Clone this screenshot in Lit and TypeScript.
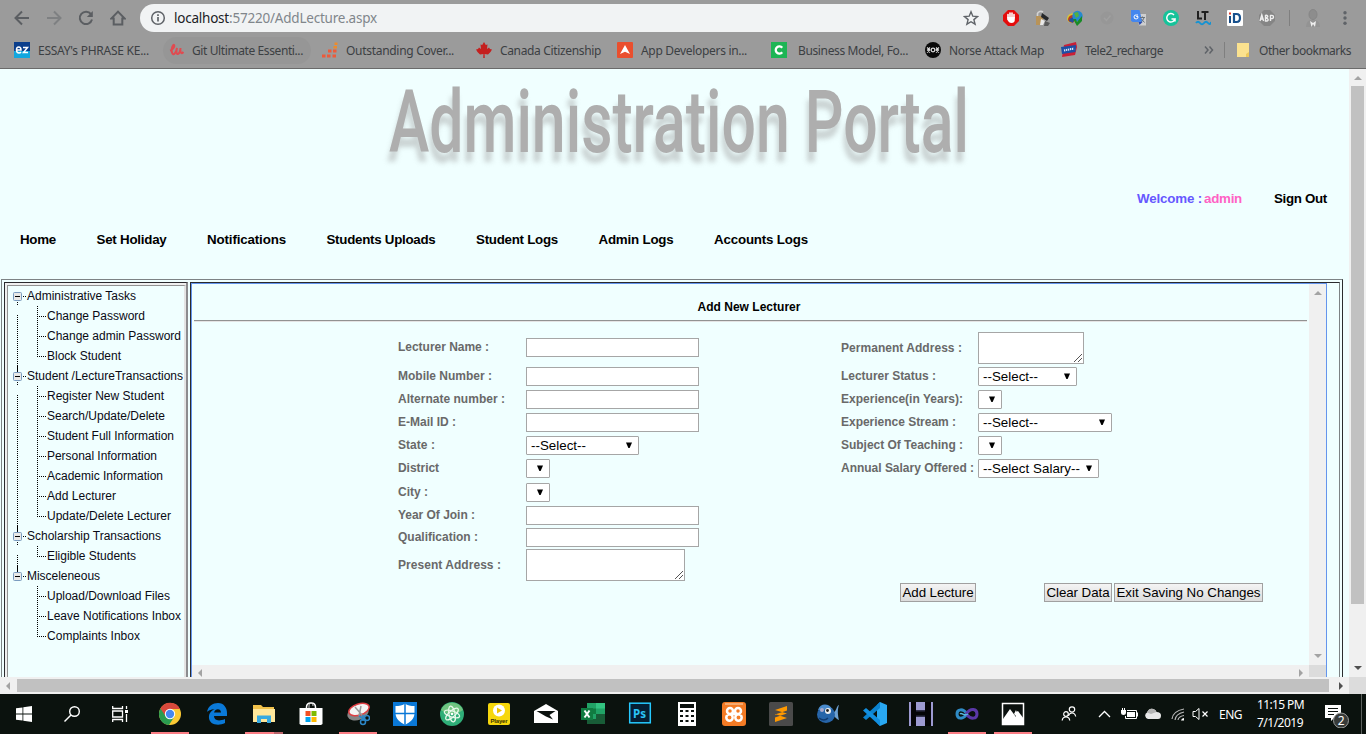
import { LitElement, html, css, svg } from "lit";
import { customElement, property } from "lit/decorators.js";

/* A single line of text whose tracking is adjusted to fill a given width. */
@customElement("fit-text")
class FitText extends LitElement {
  @property({ type: Number }) w = 0;
  @property() text = "";
  static styles = css`
    :host { display: inline-block; white-space: pre; flex: none; }
  `;
  render() {
    return html`<span>${this.text}</span>`;
  }
  updated() {
    const s = this.renderRoot.querySelector("span") as HTMLElement;
    s.style.letterSpacing = "0px";
    const natural = s.getBoundingClientRect().width;
    s.style.letterSpacing = (this.w - natural) / this.text.length + "px";
    this.style.width = this.w + "px";
  }
}

const t = (text: string, w: number) => html`<fit-text .text=${text} .w=${w}></fit-text>`;
const ico = (size: number, body: unknown, box = size) =>
  html`<svg width=${size} height=${size} viewBox="0 0 ${box} ${box}" fill="none">${body}</svg>`;

const nav = {
  back: svg`<path d="M15 8H2M8 1.5L1.5 8L8 14.5" stroke="#5b5e62" stroke-width="2"/>`,
  fwd: svg`<path d="M1 8H14M8 1.5L14.5 8L8 14.5" stroke="#7e8082" stroke-width="2"/>`,
  reload: svg`<path d="M13 4.2A6.2 6.2 0 1 0 14 9.5" stroke="#5b5e62" stroke-width="2"/><path d="M14.8 1V7H8.8Z" fill="#5b5e62"/>`,
  home: svg`<path d="M8 1.6L1.5 8.4H3.7V14.6H12.3V8.4H14.5Z" stroke="#5b5e62" stroke-width="2"/>`,
  info: svg`<circle cx="8" cy="8" r="6.3" stroke="#5f6368" stroke-width="1.5"/><path d="M8 7V11.5M8 4.2V5.9" stroke="#5f6368" stroke-width="1.7"/>`,
  star: svg`<path d="M8 1.8L9.8 6.2L14.5 6.5L10.9 9.6L12.1 14.2L8 11.7L3.9 14.2L5.1 9.6L1.5 6.5L6.2 6.2Z" stroke="#5f6368" stroke-width="1.4"/>`,
};

const extensions = [
  svg`<path d="M5 0H11L16 5V11L11 16H5L0 11V5Z" fill="#e40d0d"/><path d="M5 8V4.5M7 7.500V3M9 7.500V3M11 8V4.500" stroke="#fff" stroke-width="1.600" stroke-linecap="round"/><path d="M4.200 7H11.800V10C11.800 12 10.500 13 8.500 13C6.500 13 5.500 12 4.200 9.500Z" fill="#fff"/>`,
  svg`<path d="M2.500 6V3.500A3.500 3 0 0 1 8 2" stroke="#d4d4d4" stroke-width="1.600"/><path d="M1 6H8V15H1Z" fill="#b89358"/><path d="M7 3L14 8L12 11L6 7Z" fill="#26282b"/><path d="M6 9L10 11L8 15H5Z" fill="#e8e8e8"/><path d="M10 11L15 13L13 16H9Z" fill="#5a5a5a"/>`,
  svg`<path d="M0 9C0 4 6 2 8 4L9 11C5 14 1 13 0 9Z" fill="#d9c531"/><path d="M1 9C2 5 6 4 8 6L7 12C4 13 1 12 1 9Z" fill="#b73c23"/><path d="M2 11C3 7 6 7 8 8L6 13Z" fill="#264f9c"/><circle cx="10.500" cy="6" r="5.200" fill="#2589cf"/><path d="M7 3L11 2L12 6L9 8Z" fill="#52b043"/><path d="M6 9H9L10 12L15 6V11L10 16Z" fill="#188b26"/>`,
  svg`<circle cx="8" cy="8" r="6.500" fill="#979797"/><path d="M5 8L7.500 10.500L11.500 5.500" stroke="#a0a0a0" stroke-width="1.500"/>`,
  svg`<path d="M6 4H15V15.500H8Z" fill="#cfcfcf"/><path d="M0 0H8.500L11.500 12H1.500L0 10.500Z" fill="#4587ee"/><path d="M7 5H5.500A2 2 0 1 0 7 6.500H5.200" stroke="#fff" stroke-width="1"/><path d="M9 7.500H14M11.500 6.500V7.500M13 7.500C12.500 10 11 11 10 12M10.500 9L13.500 12.500" stroke="#68737e"/><path d="M7.500 12H11.500L8.500 15Z" fill="#2b4bb0"/>`,
  svg`<circle cx="8" cy="8" r="8" fill="#15c39a"/><path d="M11 4.900A4.200 4.200 0 1 0 12 9H8.500M12 9V11.500" stroke="#fff" stroke-width="1.500"/>`,
  svg`<path d="M3 1V8.500H7M6.500 2H13.500M10 2V10" stroke="#202020" stroke-width="2"/><path d="M1 13Q3 10.500 5 13T9 13T13 13T16 12" stroke="#1593d3" stroke-width="2"/>`,
  svg`<rect width="16" height="16" rx="1" fill="#fff"/><path d="M3 6V13" stroke="#184c85" stroke-width="2"/><path d="M3 2.500V4.500" stroke="#e53927" stroke-width="2"/><path d="M7 4H9.500Q13 4 13 8T9.500 12H7Z" stroke="#17508d" stroke-width="2.200"/>`,
  svg`<path d="M5 0H11L16 5V11L11 16H5L0 11V5Z" fill="#858585"/><path d="M1 11L2.800 5L4.600 11M1.600 9H4M6.500 5V11H8Q9.500 10.500 9 9.200T6.500 8Q9 7.500 8.700 6.200T6.500 5.300M11.500 11V5.500Q14.500 5 14.500 7T11.500 8.500" stroke="#eee" stroke-width="1.400"/>`,
];

const bookmarks: { label: string; w: number; pitch: number; gap?: boolean; pill?: boolean; icon: unknown }[] = [
  { label: "ESSAY's PHRASE KE...", w: 111, pitch: 154, icon: svg`<rect width="16" height="16" fill="#0c3f8c"/><rect y="9" width="16" height="7" fill="#12a7df"/><path d="M2.500 8H7Q7 5 4.700 5T2.500 8T5 11Q6.300 11 7 10M9 5.500H13.500L9.500 10.500H14" stroke="#fff" stroke-width="1.500"/>` },
  { label: "Git Ultimate Essenti...", w: 111, pitch: 154, pill: true, icon: svg`<path d="M2 8.500C5 8 7 4 6 3S3 7 4 10.500S8 12 9 6C8 10 8.500 12.500 10 12S12.500 8 12.500 6C12 10 13 13 15.500 10" stroke="#e04b50" stroke-width="2"/>` },
  { label: "Outstanding Cover...", w: 108, pitch: 154, icon: svg`<path d="M0 12.500H3.500V15.500H0ZM5 12.500H8.500V15.500H5ZM10.500 12.500H14V15.500H10.500ZM6 7.500H9.500V10.500H6ZM11 7.500H14.500V10.500H11Z" fill="#ed5a3a"/><path d="M11.500 4H15V6.500H11.500ZM12.500 .5H15.500V3H12.500Z" fill="#ee8b2c"/>` },
  { label: "Canada Citizenship", w: 101, pitch: 141, icon: svg`<path d="M8 0L9.800 3L11.500 2.500L11 7L13 5.500L14 7L16 7.500L14.500 10L12 12.500L8.600 12L8.800 16H7.200L7.400 12L4 12.500L1.500 10L0 7.500L2 7L3 5.500L5 7L4.500 2.500L6.200 3Z" fill="#c4201f"/>` },
  { label: "App Developers in...", w: 106, pitch: 154, icon: svg`<rect width="16" height="16" rx="1" fill="#ea4f2e"/><path d="M8 3L13 12L8 9.800L3 12Z" fill="#fff"/>` },
  { label: "Business Model, Fo...", w: 110, pitch: 154, gap: true, icon: svg`<rect width="16" height="16" fill="#1db554"/><path d="M11.200 5.800A3.600 3.600 0 1 0 11.200 10.200" stroke="#fff" stroke-width="2.300"/>` },
  { label: "Norse Attack Map", w: 95, pitch: 136, icon: svg`<circle cx="8" cy="8" r="8" fill="#0a0a0a"/><path d="M2 5.500L5 8L2 10.500M14 5.500L11 8L14 10.500M5 5.500L2.500 8L5 10.500M11 5.500L13.500 8L11 10.500" stroke="#ddd" stroke-width="1.100"/><circle cx="8" cy="8" r="1.800" stroke="#ddd" stroke-width="1.200"/>` },
  { label: "Tele2_recharge", w: 78, pitch: 139, icon: svg`<path d="M3 3L15 0L16 5L14 13L1 15Z" fill="#c91f36"/><path d="M0 5L15 3L14.500 10L1 12Z" fill="#1d4fa5"/><path d="M3 8.500L13 6.500" stroke="#dce6f6" stroke-width="2" stroke-dasharray="1.300 .7"/>` },
];

const tree = [
  { name: "Administrative Tasks", w: 109, kids: [["Change Password", 98], ["Change admin Password", 134], ["Block Student", 74]] },
  { name: "Student /LectureTransactions", w: 156, kids: [["Register New Student", 117], ["Search/Update/Delete", 118], ["Student Full Information", 127], ["Personal Information", 110], ["Academic Information", 116], ["Add Lecturer", 69], ["Update/Delete Lecturer", 124]] },
  { name: "Scholarship Transactions", w: 134, kids: [["Eligible Students", 89]] },
  { name: "Misceleneous", w: 73, kids: [["Upload/Download Files", 123], ["Leave Notifications Inbox", 134], ["Complaints Inbox", 93]] },
] as { name: string; w: number; kids: [string, number][] }[];

const menu: [string, number][] = [
  ["Home", 36], ["Set Holiday", 70], ["Notifications", 79], ["Students Uploads", 109],
  ["Student Logs", 82], ["Admin Logs", 75], ["Accounts Logs", 94],
];

type Field = { label: string; lw: number; h: number; kind: "input" | "select" | "area"; w: number; text?: string; tw?: number };
const left: Field[] = [
  { label: "Lecturer Name :", lw: 91, h: 29, kind: "input", w: 173 },
  { label: "Mobile Number :", lw: 94, h: 23, kind: "input", w: 173 },
  { label: "Alternate number :", lw: 107, h: 23, kind: "input", w: 173 },
  { label: "E-Mail ID :", lw: 58, h: 23, kind: "input", w: 173 },
  { label: "State :", lw: 37, h: 23, kind: "select", w: 113, text: "--Select--", tw: 55 },
  { label: "District", lw: 41, h: 24, kind: "select", w: 24 },
  { label: "City :", lw: 30, h: 23, kind: "select", w: 24 },
  { label: "Year Of Join :", lw: 77, h: 22, kind: "input", w: 173 },
  { label: "Qualification :", lw: 80, h: 21, kind: "input", w: 173 },
  { label: "Present Address :", lw: 103, h: 32, kind: "area", w: 159 },
];
const right: Field[] = [
  { label: "Permanent Address :", lw: 121, h: 35, kind: "area", w: 106 },
  { label: "Lecturer Status :", lw: 95, h: 23, kind: "select", w: 99, text: "--Select--", tw: 55 },
  { label: "Experience(in Years):", lw: 122, h: 23, kind: "select", w: 24 },
  { label: "Experience Stream :", lw: 115, h: 23, kind: "select", w: 134, text: "--Select--", tw: 55 },
  { label: "Subject Of Teaching :", lw: 122, h: 23, kind: "select", w: 24 },
  { label: "Annual Salary Offered :", lw: 133, h: 23, kind: "select", w: 121, text: "--Select Salary--", tw: 97 },
];

const apps: { run?: string; narrow?: boolean; icon: unknown }[] = [
  { run: "on", icon: svg`<circle cx="12" cy="12" r="11" fill="#fbc934"/><path d="M12 12L2.400 6.600A11 11 0 0 0 11 23L16.500 14.500Z" fill="#2a9c50"/><path d="M2.400 6.600A11 11 0 0 1 22 7H12L7.500 14Z" fill="#d9493c"/><circle cx="12" cy="12" r="5.200" fill="#fff"/><circle cx="12" cy="12" r="4.200" fill="#4688f1"/>` },
  { icon: svg`<path d="M2 10C3 4 8 1 13 1C19 1 22 6 22 11V14H9C9 18 13 20 20 17V21C13 24.500 3 22.500 4 14C4.500 10 8 7.500 10 7C5 7.500 3 9 2 10ZM9 10.500H16C16 6 10 6 9 10.500Z" fill="#0a79d8"/>` },
  { run: "multi", icon: svg`<path d="M1 3H9L11 5H22V20H1Z" fill="#f1c14a"/><path d="M1 7H23V20H1Z" fill="#ffe79b"/><path d="M5 21V13.500H19V21H15V17H9V21Z" fill="#36a9e1"/>` },
  { icon: svg`<path d="M7.500 8V5C7.500-.5 16.500-.5 16.500 5V8" stroke="#fff" stroke-width="1.500"/><path d="M10 6V4C10 0 14 0 14 4" stroke="#ccc"/><path d="M.5 6H23.500V22L22 23H2L.5 22Z" fill="#fff"/><path d="M6.500 9H11.500V14H6.500Z" fill="#f25022"/><path d="M12.500 9H17.500V14H12.500Z" fill="#7fba00"/><path d="M6.500 15H11.500V20H6.500Z" fill="#00a4ef"/><path d="M12.500 15H17.500V20H12.500Z" fill="#ffb900"/>` },
  { run: "on", icon: svg`<ellipse cx="12" cy="11" rx="11" ry="7" transform="rotate(-20 12 11)" fill="#858585"/><ellipse cx="13" cy="7.500" rx="10.500" ry="5.500" transform="rotate(-18 13 7.500)" fill="#f4f4f4" stroke="#df3d42" stroke-width="1.500"/><path d="M9 5L16 13M15 4L13 14" stroke="#999" stroke-width="1.500"/><path d="M13 14L20 18M17 13L17 19" stroke="#2c87c8" stroke-width="1.500"/><circle cx="21" cy="16" r="2.500" stroke="#2c87c8" stroke-width="1.500"/><circle cx="17" cy="20" r="2.500" stroke="#2c87c8" stroke-width="1.500"/>` },
  { icon: svg`<rect width="24" height="24" fill="#0a78d7"/><path d="M12 1.500C14 3.500 18 4 21.500 4V11C21.500 17 17 20 12 23C7 20 2.500 17 2.500 11V4C6 4 10 3.500 12 1.500Z" fill="#fff"/><path d="M12 1V23M2 11.500H22" stroke="#0a78d7" stroke-width="1.500"/>` },
  { icon: svg`<circle cx="12" cy="12" r="12" fill="#2fae78"/><path d="M1 8A12 12 0 0 1 23 8Q12 16 1 8Z" fill="#8bcd83" opacity=".7"/><ellipse cx="12" cy="12" rx="3" ry="8" transform="rotate(-12 12 12)" stroke="#e6f8e9" stroke-width="1.200"/><ellipse cx="12" cy="12" rx="3" ry="8" transform="rotate(48 12 12)" stroke="#e6f8e9" stroke-width="1.200"/><ellipse cx="12" cy="12" rx="3" ry="8" transform="rotate(108 12 12)" stroke="#e6f8e9" stroke-width="1.200"/><circle cx="12" cy="12" r="1.300" fill="#fff"/>` },
  { icon: svg`<rect x="1" y="1" width="22" height="22" rx="2" fill="#f6d70c"/><circle cx="12" cy="8.500" r="6" fill="#fff"/><path d="M10 5.500L15 8.500L10 11.500Z" fill="#f0c400"/><text x="3.500" y="21" font-family="Liberation Sans" font-weight="700" font-size="6" textLength="17" fill="#3b3200">Player</text>` },
  { icon: svg`<path d="M0 9L12 2L24 9V21H0Z" fill="#fff"/><path d="M2.500 9H21.500L15.500 13L19 17.500L12 14.500Z" fill="#0b110e"/>` },
  { icon: svg`<path d="M6 1H24V22H6Z" fill="#21a366"/><path d="M15 1H24V6.500H15Z" fill="#33c481"/><path d="M6 6.500H15V12H6Z" fill="#107c41"/><path d="M15 12H24V17H15ZM6 17H24V22H6Z" fill="#185c37"/><rect y="6" width="12" height="12" fill="#107c41"/><path d="M3.500 8.500L8.500 15.500M8.500 8.500L3.500 15.500" stroke="#fff" stroke-width="2"/>` },
  { icon: svg`<rect x="1.700" y="1.200" width="20.600" height="19.600" fill="#061e33" stroke="#26c9ff" stroke-width="1.500"/><text x="5" y="15.500" font-family="Noto Sans" font-weight="700" font-size="12.500" textLength="13" lengthAdjust="spacingAndGlyphs" fill="#2ac4f7">Ps</text>` },
  { icon: svg`<path d="M3 0H21V24H3Z" fill="#fff"/><path d="M5 2H19V6H5Z" fill="#0b110e"/><path d="M5 9H8M10.500 9H13.500M16 9H19M5 14H8M10.500 14H13.500M16 14H19M5 19H8M10.500 19H13.500M16 19H19" stroke="#0b110e" stroke-width="2"/>` },
  { icon: svg`<rect width="24" height="24" rx="3" fill="#f47b25"/><path d="M3 2H21" stroke="#f9ba88" stroke-width="1.500"/><circle cx="8" cy="9" r="3" stroke="#fff" stroke-width="2.500"/><circle cx="16" cy="9" r="3" stroke="#fff" stroke-width="2.500"/><circle cx="7.500" cy="15.500" r="3.200" stroke="#fff" stroke-width="2.500"/><circle cx="16.500" cy="15.500" r="3.200" stroke="#fff" stroke-width="2.500"/><path d="M3.500 11.500L6 12.200L3.500 13ZM20.500 11.500L18 12.200L20.500 13Z" fill="#f47b25"/><path d="M10 12H14" stroke="#fff" stroke-width="2.500"/>` },
  { icon: svg`<rect width="24" height="24" rx="1.500" fill="#4a4a4a"/><path d="M6 8L18 4V8.500L6 12.500ZM6 8V12L18 16V11.500ZM6 15.500L18 11.500V16L6 20Z" fill="#ff9900"/>` },
  { icon: svg`<path d="M17 11C21 9 20 4 23 3C21 8 22 14 23 18C20 17 19 14 17 14Z" fill="#6da0d1"/><ellipse cx="10" cy="12.500" rx="9" ry="8.500" fill="#2765a9"/><path d="M2 8C4 1 13 1 16 7Z" fill="#4b8bcc"/><circle cx="6" cy="8" r="2" fill="#aac"/><circle cx="12" cy="9" r="3" fill="#eee"/><circle cx="11.500" cy="8.500" r="1.400" fill="#222"/><path d="M3 16Q8 20 12 16" stroke="#123b6e" stroke-width="1.500"/>` },
  { icon: svg`<path d="M17 0L24 3V21L17 24L14 21V3Z" fill="#29a8f2"/><path d="M17 6L3 18L0 15.500L17 0Z" fill="#0b82cf"/><path d="M17 18L3 6L0 8.500L17 24Z" fill="#128fe0"/>` },
  { narrow: true, icon: svg`<rect width="24" height="24" fill="#050507"/><path d="M0 0H2V24H0ZM22 0H24V24H22ZM7 0H16V8H7ZM7 15H16V24H7Z" fill="#9d9ad1"/><path d="M7 8H16V9.500H7ZM7 13.500H16V15H7Z" fill="#33334c"/>` },
  { narrow: true, run: "on", icon: svg`<path d="M12 12C8 6 2 7 2 12S8 18 12 12" stroke="#2f8bc5" stroke-width="3"/><path d="M11 12C16 5 22 7 22 12S16 18 11 12" stroke="#5b38a8" stroke-width="3"/><path d="M5 12C7 10 9 15 13 12" stroke="#56b8df" stroke-width="1.500"/>` },
  { narrow: true, run: "on", icon: svg`<rect x="1.500" y="1.500" width="21" height="21" fill="#0b110e" stroke="#fff" stroke-width="1.500"/><path d="M2 22V17L9 7L15 15V10L17 9L23 17V22Z" fill="#fff"/><path d="M13 12L18 17L15 8" fill="#fff"/>` },
];

const grip = svg`<path d="M1 9L9 1M5 9L9 5" stroke="#555" stroke-width="1"/>`;

@customElement("app-root")
class AppRoot extends LitElement {
  static styles = css`
    :host { display: block; width: 1366px; height: 734px; overflow: hidden; font-family: "Liberation Sans", Arial, sans-serif; }
    * { box-sizing: border-box; }
    svg { display: block; flex: none; }
    .screen { display: flex; flex-direction: column; height: 734px; }

    .chrome { height: 69px; background: #9b9b9b; border-bottom: 1px solid #6a6a6a; font-family: "Noto Sans", sans-serif; color: #3c4043; }
    .toolbar { display: flex; align-items: center; height: 36px; padding-left: 14px; }
    .toolbar > .nav { display: flex; gap: 16px; margin-right: 14px; }
    .omni { display: flex; flex: none; align-items: center; width: 849px; height: 28px; border-radius: 14px; background: #f1f3f4; padding: 0 10px; color: #202124; font-size: 13.500px; }
    .omni fit-text { margin-left: 8px; }
    .omni fit-text.path { margin-left: 0; color: #80868b; }
    .omni .star { margin-left: auto; }
    .exts { display: flex; gap: 16px; margin-left: 14px; }
    .vsep { width: 1px; height: 16px; background: #7f7f7f; }
    .exts + .vsep { margin-left: 14px; }
    .avatar { margin-left: 14px; }
    .dots { margin-left: 20px; }
    .marks { display: flex; align-items: center; height: 28px; padding-left: 14px; font-size: 12px; }
    .mark { display: flex; align-items: center; gap: 8px; flex: none; position: relative; }
    .mark.wide { gap: 11px; }
    .mark.pill::before { content: ""; position: absolute; left: -5px; top: -5px; width: 148px; height: 27px; border-radius: 14px; background: #969696; }
    .mark.pill > * { position: relative; }
    .more { margin-left: 4px; margin-right: 10px; }
    .folder { margin-left: 12px; margin-right: 8px; }

    .view { display: flex; height: 608px; }
    .page { width: 1349px; height: 608px; background: #f0ffff; overflow: hidden; }
    .banner { display: block; margin-left: 370px; overflow: visible; }
    .banner text { font: 500 88px Roboto, sans-serif; fill: #aeaeae; filter: drop-shadow(-2px 10px 2.500px rgba(150,150,150,.42)); }
    .account { display: flex; justify-content: flex-end; align-items: center; height: 20px; margin-top: 9px; padding-right: 22px; font-weight: 700; font-size: 13.333px; }
    .hello { color: #6658ff; }
    .who { color: #ff62c4; margin: 0 32px 0 2px; }
    .menu { display: flex; gap: 40.500px; padding-left: 20px; height: 20px; align-items: center; margin-top: 21px; font-weight: 700; font-size: 13.333px; }

    .frame { display: flex; gap: 2px; width: 1342px; height: 401px; margin: 30px 0 0 1px; padding: 2px; border: 1px solid #7d8385; border-right-color: #2a2d2e; }
    .side { width: 184px; padding: 2px 0 0 2px; background: #efefef; border: solid #2a2a2e; border-width: 1px 2px 0 1px; border-right-color: #8c8c8f; }
    .tree { height: 400px; background: #f0ffff; border: solid #929292; border-width: 1px 2px 0 1px; border-right-color: #e4e4e4; font-size: 12px; color: #0a0a14; }
    .group { display: grid; grid-template-columns: 19px 1fr; }
    .head, .leaf { display: flex; align-items: center; height: 20px; }
    .head { grid-column: 1 / 3; padding-left: 4px; }
    .trunk { margin: 9px 0 0 9px; width: 1px; background: repeating-linear-gradient(#000 0 1px, transparent 1px 2px); }
    .trunk.none { background: none; }

    .main { width: 1150px; border: solid #2a2a2e; border-width: 1px 1px 0 1px; border-right-color: #7d8385; }
    .inner { width: 1136px; border: solid #6495ed; border-width: 1px 1px 0 1px; display: grid; grid-template-columns: 1117px 17px; grid-template-rows: 381px 20px; }
    .doc { padding: 0 2px; }
    .doc h2 { display: flex; justify-content: center; align-items: center; margin: 0; padding: 9px 3px 0 0; font-size: 12px; border-bottom: 1px solid #929292; height: 37px; }
    .rule { height: 1px; background: #e4e4e4; }
    .form { display: flex; height: 261px; }
    .col { display: flex; flex-direction: column; width: 443px; }
    .col.l { margin-left: 204px; padding-top: 16px; }
    .col.r { padding-top: 10px; }
    .row { display: flex; flex: none; }
    .lab { color: #696969; font-weight: 700; font-size: 12px; line-height: 19px; flex: none; width: 128px; }
    .r .lab { width: 137px; }
    .lab.tall { line-height: 32px; }
    .ctl { display: flex; height: 19px; background: #fff; border: 1px solid #a6a6a6; flex: none; }
    .ctl.area { height: 32px; align-items: flex-end; justify-content: flex-end; }
    .ctl.sel { align-items: center; justify-content: space-between; border-radius: 1px; padding: 0 5px 0 4px; font-size: 13.333px; color: #000; }
    .ctl.sel svg { margin-left: auto; }
    .btns { display: flex; padding-left: 706px; }
    .btn { display: flex; align-items: center; justify-content: center; height: 19px; font-size: 13.333px; border: 1px solid #a0a0a0; background: linear-gradient(#f4f4f4, #dcdcdc); flex: none; }
    .b1 { width: 76px; }
    .b2 { width: 68px; margin: 0 2px 0 68px; }
    .b3 { width: 149px; }
    .isv { display: flex; flex-direction: column; justify-content: space-between; align-items: center; background: #f0f0f0; padding: 5px 0 5px; }
    .ish { display: flex; justify-content: space-between; align-items: flex-start; background: #f0f0f0; padding: 4px 4px 0 4px; }
    .corner { background: #dcdcdc; }

    .vbar { width: 17px; display: flex; flex-direction: column; align-items: center; background: #f0f0f0; padding-top: 5px; }
    .vthumb { width: 13px; height: 518px; background: #c1c1c1; margin: 4px 0 60px; flex: none; }
    .hbar { display: flex; align-items: center; height: 17px; background: #f0f0f0; padding-left: 4px; flex: none; }
    .hthumb { width: 1312px; height: 13px; background: #c1c1c1; margin: 0 8px 0 5px; }
    .hbar .corner { width: 17px; height: 17px; margin-left: auto; }

    .task { display: flex; height: 40px; background: #0b120e; color: #fff; flex: none; font-family: "Noto Sans", sans-serif; font-size: 12px; }
    .sys, .app { display: flex; align-items: center; justify-content: center; width: 48px; height: 40px; }
    .app { width: 47px; flex-direction: column; padding-top: 8px; justify-content: flex-start; }
    .app.narrow { width: 46px; }
    .line { width: 38px; height: 2px; margin-top: 6px; background: #fa7d84; flex: none; }
    .line.multi { background: linear-gradient(90deg, #fa7d84 29px, #b9646a 29px); }
    .sys:nth-child(3) { margin-right: 2px; }
    .tray { display: flex; align-items: center; margin-left: 25px; }
    .clock { display: flex; flex-direction: column; line-height: 18px; margin-left: 15px; height: 37px; margin-top: 1px; }
    .lang { margin-left: 10px; }
    .notif { margin-left: 21px; }
    .edge { width: 1px; height: 40px; background: #5c615e; margin-left: 10px; }
  `;

  arrow(dir: "up" | "down" | "left" | "right", color: string) {
    const d = { up: "M0 6L4 2L8 6Z", down: "M0 2L4 6L8 2Z", left: "M6 0L2 4L6 8Z", right: "M2 0L6 4L2 8Z" }[dir];
    return ico(8, svg`<path d=${d} fill=${color}/>`);
  }

  field(f: Field) {
    return html`<div class="row" style="height:${f.h}px">
      <div class="lab ${f.kind === "area" ? "tall" : ""}">${t(f.label, f.lw)}</div>
      ${f.kind === "input"
        ? html`<div class="ctl" style="width:${f.w}px"></div>`
        : f.kind === "area"
        ? html`<div class="ctl area" style="width:${f.w}px">${ico(10, grip)}</div>`
        : html`<div class="ctl sel" style="width:${f.w}px">${f.text ? t(f.text, f.tw!) : ""}${ico(8, svg`<path d="M1 0.500H7L4.600 6H3.400Z" fill="#000"/>`)}</div>`}
    </div>`;
  }

  treeGroup(g: (typeof tree)[0], i: number) {
    const last = i === tree.length - 1;
    return html`<div class="group">
      <div class="head">
        <svg width="15" height="20" viewBox="0 0 15 20" fill="none">
          ${i > 0 ? svg`<path d="M5.500 0V6" stroke="#000"/>` : ""}
          ${last ? "" : svg`<path d="M5.500 16V20" stroke="#000" stroke-dasharray="1 1"/>`}
          <rect x="1.500" y="6.500" width="8" height="8" rx="1" fill="#e9e9e6" stroke="#7a9cc0"/>
          <path d="M3 10.500H8" stroke="#000"/>
          <path d="M11 10.500H15" stroke="#000" stroke-dasharray="1 1"/>
        </svg>${t(g.name, g.w)}
      </div>
      <div class="trunk ${last ? "none" : ""}"></div>
      <div>
        ${g.kids.map(([name, w], k) => html`<div class="leaf">
          <svg width="20" height="20" viewBox="0 0 20 20" fill="none">
            <path d=${k === g.kids.length - 1 ? "M10.500 0V11" : "M10.500 0V20"} stroke="#000" stroke-dasharray="1 1"/>
            <path d="M12 10.500H20" stroke="#000" stroke-dasharray="1 1"/>
          </svg>${t(name, w)}
        </div>`)}
      </div>
    </div>`;
  }

  render() {
    return html`<div class="screen">
      <div class="chrome">
        <div class="toolbar">
          <div class="nav">${[nav.back, nav.fwd, nav.reload, nav.home].map((n) => ico(16, n))}</div>
          <div class="omni">${ico(16, nav.info)}${t("localhost", 55)}<fit-text class="path" .text=${":57220/AddLecture.aspx"} .w=${148}></fit-text><div class="star">${ico(16, nav.star)}</div></div>
          <div class="exts">${extensions.map((e) => ico(16, e))}</div>
          <div class="vsep"></div>
          <div class="avatar">${ico(18, svg`<ellipse cx="9" cy="5.500" rx="4" ry="5" fill="#8d8d8d" stroke="#868686"/><path d="M2 18Q2 12 7 11H11Q16 12 16 18Z" fill="#939393"/><path d="M6 12L9 14L12 12L11 18L9 15L7.500 18Z" fill="#eee"/>`)}</div>
          <div class="dots">${ico(16, svg`<circle cx="3" cy="2.800" r="1.700" fill="#5f6368"/><circle cx="3" cy="8" r="1.700" fill="#5f6368"/><circle cx="3" cy="13.200" r="1.700" fill="#5f6368"/>`)}</div>
        </div>
        <div class="marks">
          ${bookmarks.map((b) => html`<div class="mark ${b.gap ? "wide" : ""} ${b.pill ? "pill" : ""}" style="width:${b.pitch}px">${ico(16, b.icon)}${t(b.label, b.w)}</div>`)}
          <div class="more">${ico(10, svg`<path d="M1 1.500L4 5L1 8.500M5.500 1.500L8.500 5L5.500 8.500" stroke="#5f6368" stroke-width="1.500"/>`)}</div>
          <div class="vsep"></div>
          <div class="folder">${ico(14, svg`<path d="M0 0H12V11L9 14H0Z" fill="#fbe28f"/><path d="M12 9L9 11V14H12Z" fill="#eec95a"/>`)}</div>
          ${t("Other bookmarks", 92)}
        </div>
      </div>

      <div class="view">
        <div class="page">
          <svg class="banner" width="620" height="110" viewBox="0 0 620 110"><text x="19" y="83" textLength="580" lengthAdjust="spacingAndGlyphs">Administration Portal</text></svg>
          <div class="account"><span class="hello">${t("Welcome :", 65)}</span><span class="who">${t("admin", 38)}</span>${t("Sign Out", 53)}</div>
          <div class="menu">${menu.map(([m, w]) => t(m, w))}</div>
          <div class="frame">
            <div class="side"><div class="tree">${tree.map((g, i) => this.treeGroup(g, i))}</div></div>
            <div class="main">
              <div class="inner">
                <div class="doc">
                  <h2>${t("Add New Lecturer", 103)}</h2>
                  <div class="rule"></div>
                  <div class="form">
                    <div class="col l">${left.map((f) => this.field(f))}</div>
                    <div class="col r">${right.map((f) => this.field(f))}</div>
                  </div>
                  <div class="btns">
                    <div class="btn b1">${t("Add Lecture", 71)}</div>
                    <div class="btn b2">${t("Clear Data", 63)}</div>
                    <div class="btn b3">${t("Exit Saving No Changes", 144)}</div>
                  </div>
                </div>
                <div class="isv">${this.arrow("up", "#a3a3a3")}${this.arrow("down", "#a3a3a3")}</div>
                <div class="ish">${this.arrow("left", "#a3a3a3")}${this.arrow("right", "#a3a3a3")}</div>
                <div class="corner"></div>
              </div>
            </div>
          </div>
        </div>
        <div class="vbar">${this.arrow("up", "#a3a3a3")}<div class="vthumb"></div>${this.arrow("down", "#505050")}</div>
      </div>
      <div class="hbar">${this.arrow("left", "#a3a3a3")}<div class="hthumb"></div>${this.arrow("right", "#505050")}<div class="corner"></div></div>

      <div class="task">
        <div class="sys">${ico(16, svg`<path d="M0 2.300L6.500 1.400V7.600H0ZM7.300 1.300L16 0V7.600H7.300ZM0 8.400H6.500V14.600L0 13.700ZM7.300 8.400H16V16L7.300 14.700Z" fill="#fff"/>`)}</div>
        <div class="sys">${ico(16, svg`<circle cx="10.500" cy="5.500" r="4.800" stroke="#fff" stroke-width="1.400"/><path d="M7 9L0.500 15.500" stroke="#fff" stroke-width="1.400"/>`)}</div>
        <div class="sys">${ico(16, svg`<path d="M.7 0V2.500H10.500V0M.7 5H10.500V11H.7ZM.7 16V13.500H10.500V16M14.500 0V3M14.500 8V16" stroke="#fff" stroke-width="1.300"/><path d="M13 4H16V7H13Z" fill="#fff"/>`)}</div>
        ${apps.map((a) => html`<div class="app ${a.narrow ? "narrow" : ""}">${ico(24, a.icon)}${a.run ? html`<div class="line ${a.run}"></div>` : ""}</div>`)}
        <div class="tray">
          ${ico(16, svg`<circle cx="11" cy="3.500" r="2.700" stroke="#fff" stroke-width="1.200"/><path d="M7.500 10Q8 7 11 7T14.700 10.500" stroke="#fff" stroke-width="1.200"/><circle cx="5" cy="8" r="2.300" stroke="#fff" stroke-width="1.200"/><path d="M1.200 14.500Q1.500 11 5 11T8.700 14.500" stroke="#fff" stroke-width="1.200"/>`)}
          <svg width="68" height="16" viewBox="0 0 68 16" fill="none">
            <path d="M22 11L27.500 5.500L33 11" stroke="#fff" stroke-width="1.300"/>
            <rect x="50" y="6" width="8" height="5" fill="#fff"/><path d="M50 4.500H59.500V12.500H48.500V10M60.500 6.500V10.500" stroke="#fff"/><path d="M45.500 2V5M47.500 2V5" stroke="#fff"/><path d="M44 4H49V7Q49 9 46.500 9T44 7Z" fill="#fff"/>
          </svg>
          <svg width="16" height="16" viewBox="0 0 16 16"><path d="M3 13A3.500 3.500 0 0 1 2 6.500Q4 1.500 8.500 3Q11 4 11.500 6Q16 6 16 9.500T13 13Z" fill="#e8e8e8"/><path d="M2 6.500Q4 1.500 8.500 3Q11 4 11.500 6L6 8Z" fill="#b5b5b5"/></svg>
          <svg width="40" height="16" viewBox="0 0 40 16" fill="none">
            <path d="M11 13Q12 5 23 3M14 14Q14.500 8 23 6M17 14Q17.500 10.500 23 9.500" stroke="#b8b8b8" stroke-width="1.200"/><path d="M20 14.500A3 3 0 0 1 23 12V14.500Z" fill="#fff"/>
            <path d="M32 5.500H34.500L38 2.500V13.500L34.500 10.500H32Z" stroke="#fff"/>
          </svg>
          ${ico(8, svg`<path d="M1.500 1.500L6.500 6.500M6.500 1.500L1.500 6.500" stroke="#fff" stroke-width="1.200"/>`)}
          <span class="lang">${t("ENG", 23)}</span>
          <div class="clock">${t("11:15 PM", 47)}${t("7/1/2019", 46)}</div>
          <div class="notif"><svg width="26" height="28" viewBox="0 0 26 28" fill="none"><path d="M0 5H16V18H9L6 21V18H0Z" fill="#fff"/><path d="M3 8.500H13M3 11.500H13M3 14.500H9" stroke="#0b120e"/><circle cx="16" cy="20.500" r="7.500" fill="#383b39" stroke="#9b9d9c"/><text x="12.800" y="25" font-family="Noto Sans" font-size="12" fill="#fff">2</text></svg></div>
          <div class="edge"></div>
        </div>
      </div>
    </div>`;
  }
}
